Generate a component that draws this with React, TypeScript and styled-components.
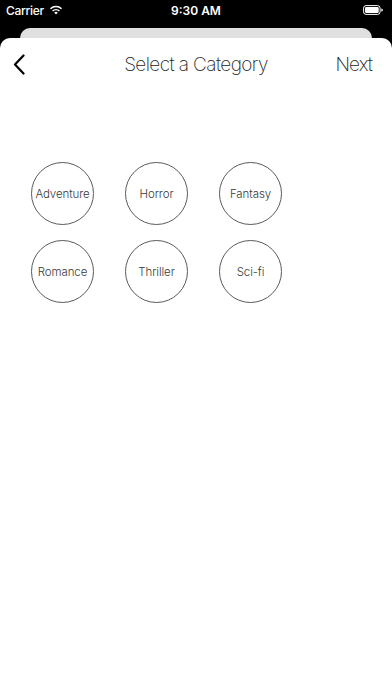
import React from "react";
import styled, { createGlobalStyle } from "styled-components";

const Global = createGlobalStyle`
  html, body { margin: 0; padding: 0; background: #000; }
  body { font-family: Inter, "Noto Sans", sans-serif; -webkit-font-smoothing: antialiased; }
`;

const Screen = styled.div`
  width: 392px;
  height: 696px;
  background: #000;
  display: flex;
  flex-direction: column;
  overflow: hidden;
`;

const StatusBar = styled.div`
  height: 20px;
  padding: 0 6px;
  display: grid;
  grid-template-columns: 1fr auto 1fr;
  align-items: center;
  color: #fff;
  font-size: 12px;
  font-weight: 500;
`;

const StatusLeft = styled.div`
  display: flex;
  align-items: center;
  gap: 5px;
  letter-spacing: -0.3px;
`;

const StatusRight = styled.div`
  display: flex;
  justify-content: flex-end;
  padding-right: 3px;
`;

const Time = styled.span`
  font-weight: 600;
`;

const BackCard = styled.div`
  margin: 8px 20px 0;
  height: 14px;
  background: #e0e0e0;
  border-radius: 10px 10px 0 0;
`;

const Sheet = styled.div`
  flex: 1;
  margin-top: -4px;
  background: #fff;
  border-radius: 10px 10px 0 0;
  display: flex;
  flex-direction: column;
`;

const NavBar = styled.div`
  height: 52px;
  display: grid;
  grid-template-columns: 87px 1fr 80px;
  align-items: center;
  padding: 0 20px 0 13px;
`;

const BackButton = styled.button`
  border: none;
  background: none;
  padding: 0;
  width: 12px;
  height: 24px;
  display: flex;
  align-items: center;
  justify-content: flex-start;
`;

const Title = styled.div`
  text-align: center;
  font-size: 19px;
  font-weight: 250;
  color: #222;
  letter-spacing: -0.6px;
`;

const NextButton = styled.div`
  text-align: right;
  font-size: 19px;
  font-weight: 250;
  color: #222;
  letter-spacing: -0.9px;
`;

const Grid = styled.div`
  display: grid;
  grid-template-columns: repeat(3, 63px);
  column-gap: 31px;
  row-gap: 15px;
  padding: 72px 0 0 31px;
`;

const Circle = styled.div`
  width: 63px;
  height: 63px;
  box-sizing: border-box;
  border: 1px solid #5a5a5a;
  border-radius: 50%;
  display: flex;
  align-items: center;
  justify-content: center;
  font-size: 11.5px;
  font-weight: 300;
  color: #3a3a3a;
  letter-spacing: -0.1px;
`;

const categories = ["Adventure", "Horror", "Fantasy", "Romance", "Thriller", "Sci-fi"];

export default function App() {
  return (
    <Screen>
      <Global />
      <StatusBar>
        <StatusLeft>
          <span>Carrier</span>
          <svg width="14" height="10" viewBox="0 0 14 10">
            <path d="M7 9.5 L5.2 7.6 A2.6 2.6 0 0 1 8.8 7.6 Z" fill="#fff" />
            <path d="M3.6 6 A4.9 4.9 0 0 1 10.4 6" stroke="#fff" strokeWidth="1.5" fill="none" />
            <path d="M1.5 3.8 A7.8 7.8 0 0 1 12.5 3.8" stroke="#fff" strokeWidth="1.5" fill="none" />
          </svg>
        </StatusLeft>
        <Time>9:30 AM</Time>
        <StatusRight>
          <svg width="20" height="10" viewBox="0 0 20 10">
            <rect x="0.6" y="0.6" width="16.5" height="8.8" rx="2.5" stroke="#fff" strokeWidth="1" fill="none" />
            <rect x="2" y="2" width="13.7" height="6" rx="1.3" fill="#fff" />
            <path d="M18.3 3.4 V6.6 A1.6 1.6 0 0 0 18.3 3.4 Z" fill="#fff" />
          </svg>
        </StatusRight>
      </StatusBar>
      <BackCard />
      <Sheet>
        <NavBar>
          <BackButton>
            <svg width="12" height="21" viewBox="0 0 12 21">
              <path d="M10.5 1.5 L2 10.5 L10.5 19.5" stroke="#000" strokeWidth="2.2" fill="none" strokeLinecap="round" strokeLinejoin="round" />
            </svg>
          </BackButton>
          <Title>Select a Category</Title>
          <NextButton>Next</NextButton>
        </NavBar>
        <Grid>
          {categories.map((c) => (
            <Circle key={c}>{c}</Circle>
          ))}
        </Grid>
      </Sheet>
    </Screen>
  );
}
